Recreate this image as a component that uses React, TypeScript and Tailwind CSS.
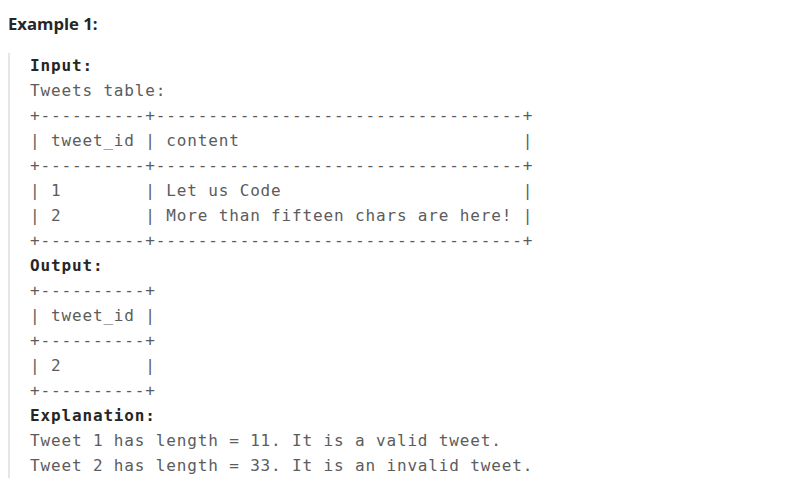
const example = [
  { bold: true, text: 'Input:' },
  { text: 'Tweets table:' },
  { text: '+----------+-----------------------------------+' },
  { text: '| tweet_id | content                           |' },
  { text: '+----------+-----------------------------------+' },
  { text: '| 1        | Let us Code                       |' },
  { text: '| 2        | More than fifteen chars are here! |' },
  { text: '+----------+-----------------------------------+' },
  { bold: true, text: 'Output:' },
  { text: '+----------+' },
  { text: '| tweet_id |' },
  { text: '+----------+' },
  { text: '| 2        |' },
  { text: '+----------+' },
  { bold: true, text: 'Explanation:' },
  { text: 'Tweet 1 has length = 11. It is a valid tweet.' },
  { text: 'Tweet 2 has length = 33. It is an invalid tweet.' },
];

const App = () => {
  return (
    <div className="min-h-screen bg-white px-2 pt-3">
      <p className="font-['Open_Sans',sans-serif] text-[16.7px] leading-6 font-bold text-[#262626]">
        Example 1:
      </p>
      <div className="mt-[17px] border-l-2 border-[#e6e6e6] pl-5">
        <pre className="font-['DejaVu_Sans_Mono',monospace] text-[16px] leading-[25px] tracking-[0.85px] text-[#5c5c5c]">
          {example.map((line, i) => (
            <div key={i} className={line.bold ? 'font-bold text-[#262626]' : ''}>
              {line.text}
            </div>
          ))}
        </pre>
      </div>
    </div>
  );
};

export default App;
